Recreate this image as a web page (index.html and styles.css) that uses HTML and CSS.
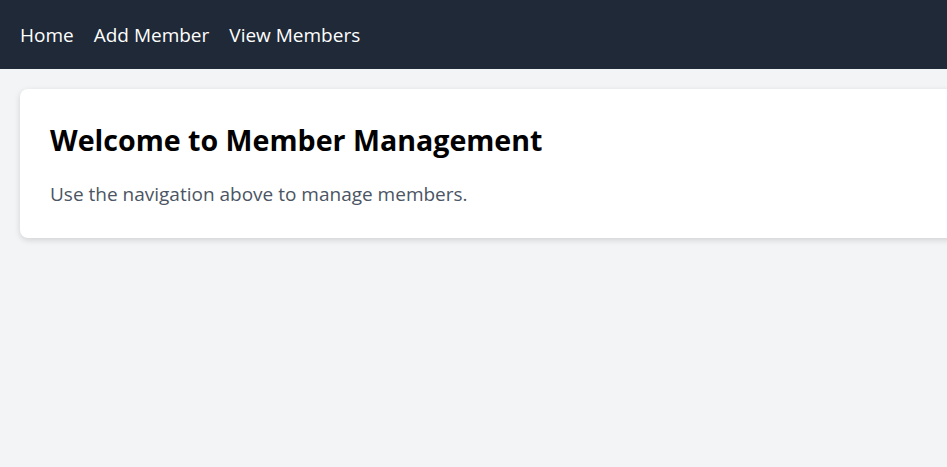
FILE: index.html
```html
<!DOCTYPE html>
<html lang="en">
<head>
<meta charset="utf-8">
<title>Member Management</title>
<link rel="stylesheet" href="styles.css">
</head>
<body>
<nav class="navbar">
  <a href="#" class="nav-link">Home</a>
  <a href="#" class="nav-link">Add Member</a>
  <a href="#" class="nav-link">View Members</a>
</nav>
<main class="content">
  <section class="card">
    <h1 class="card-title">Welcome to Member Management</h1>
    <p class="card-text">Use the navigation above to manage members.</p>
  </section>
</main>
</body>
</html>
```
FILE: styles.css
```css
html, body {
  margin: 0;
  padding: 0;
  overflow: hidden;
}
body {
  background: #f3f4f6;
  font-family: "Open Sans", "Noto Sans", sans-serif;
  height: 467px;
}
.navbar {
  background: #1f2937;
  height: 69px;
  display: flex;
  align-items: center;
  gap: 20px;
  padding: 0 20px;
  box-sizing: border-box;
}
.nav-link {
  color: #ffffff;
  text-decoration: none;
  font-size: 19px;
}
.content {
  padding: 20px;
}
.card {
  background: #ffffff;
  border-radius: 8px;
  box-shadow: 0 2px 6px rgba(0,0,0,0.14);
  padding: 30px;
  width: 1000px;
  box-sizing: border-box;
}
.card-title {
  margin: 0;
  font-size: 28.6px;
  font-weight: 700;
  color: #000;
  line-height: 42px;
}
.card-text {
  margin: 20px 0 0;
  font-size: 19px;
  color: #4b5563;
  line-height: 27px;
}
```
